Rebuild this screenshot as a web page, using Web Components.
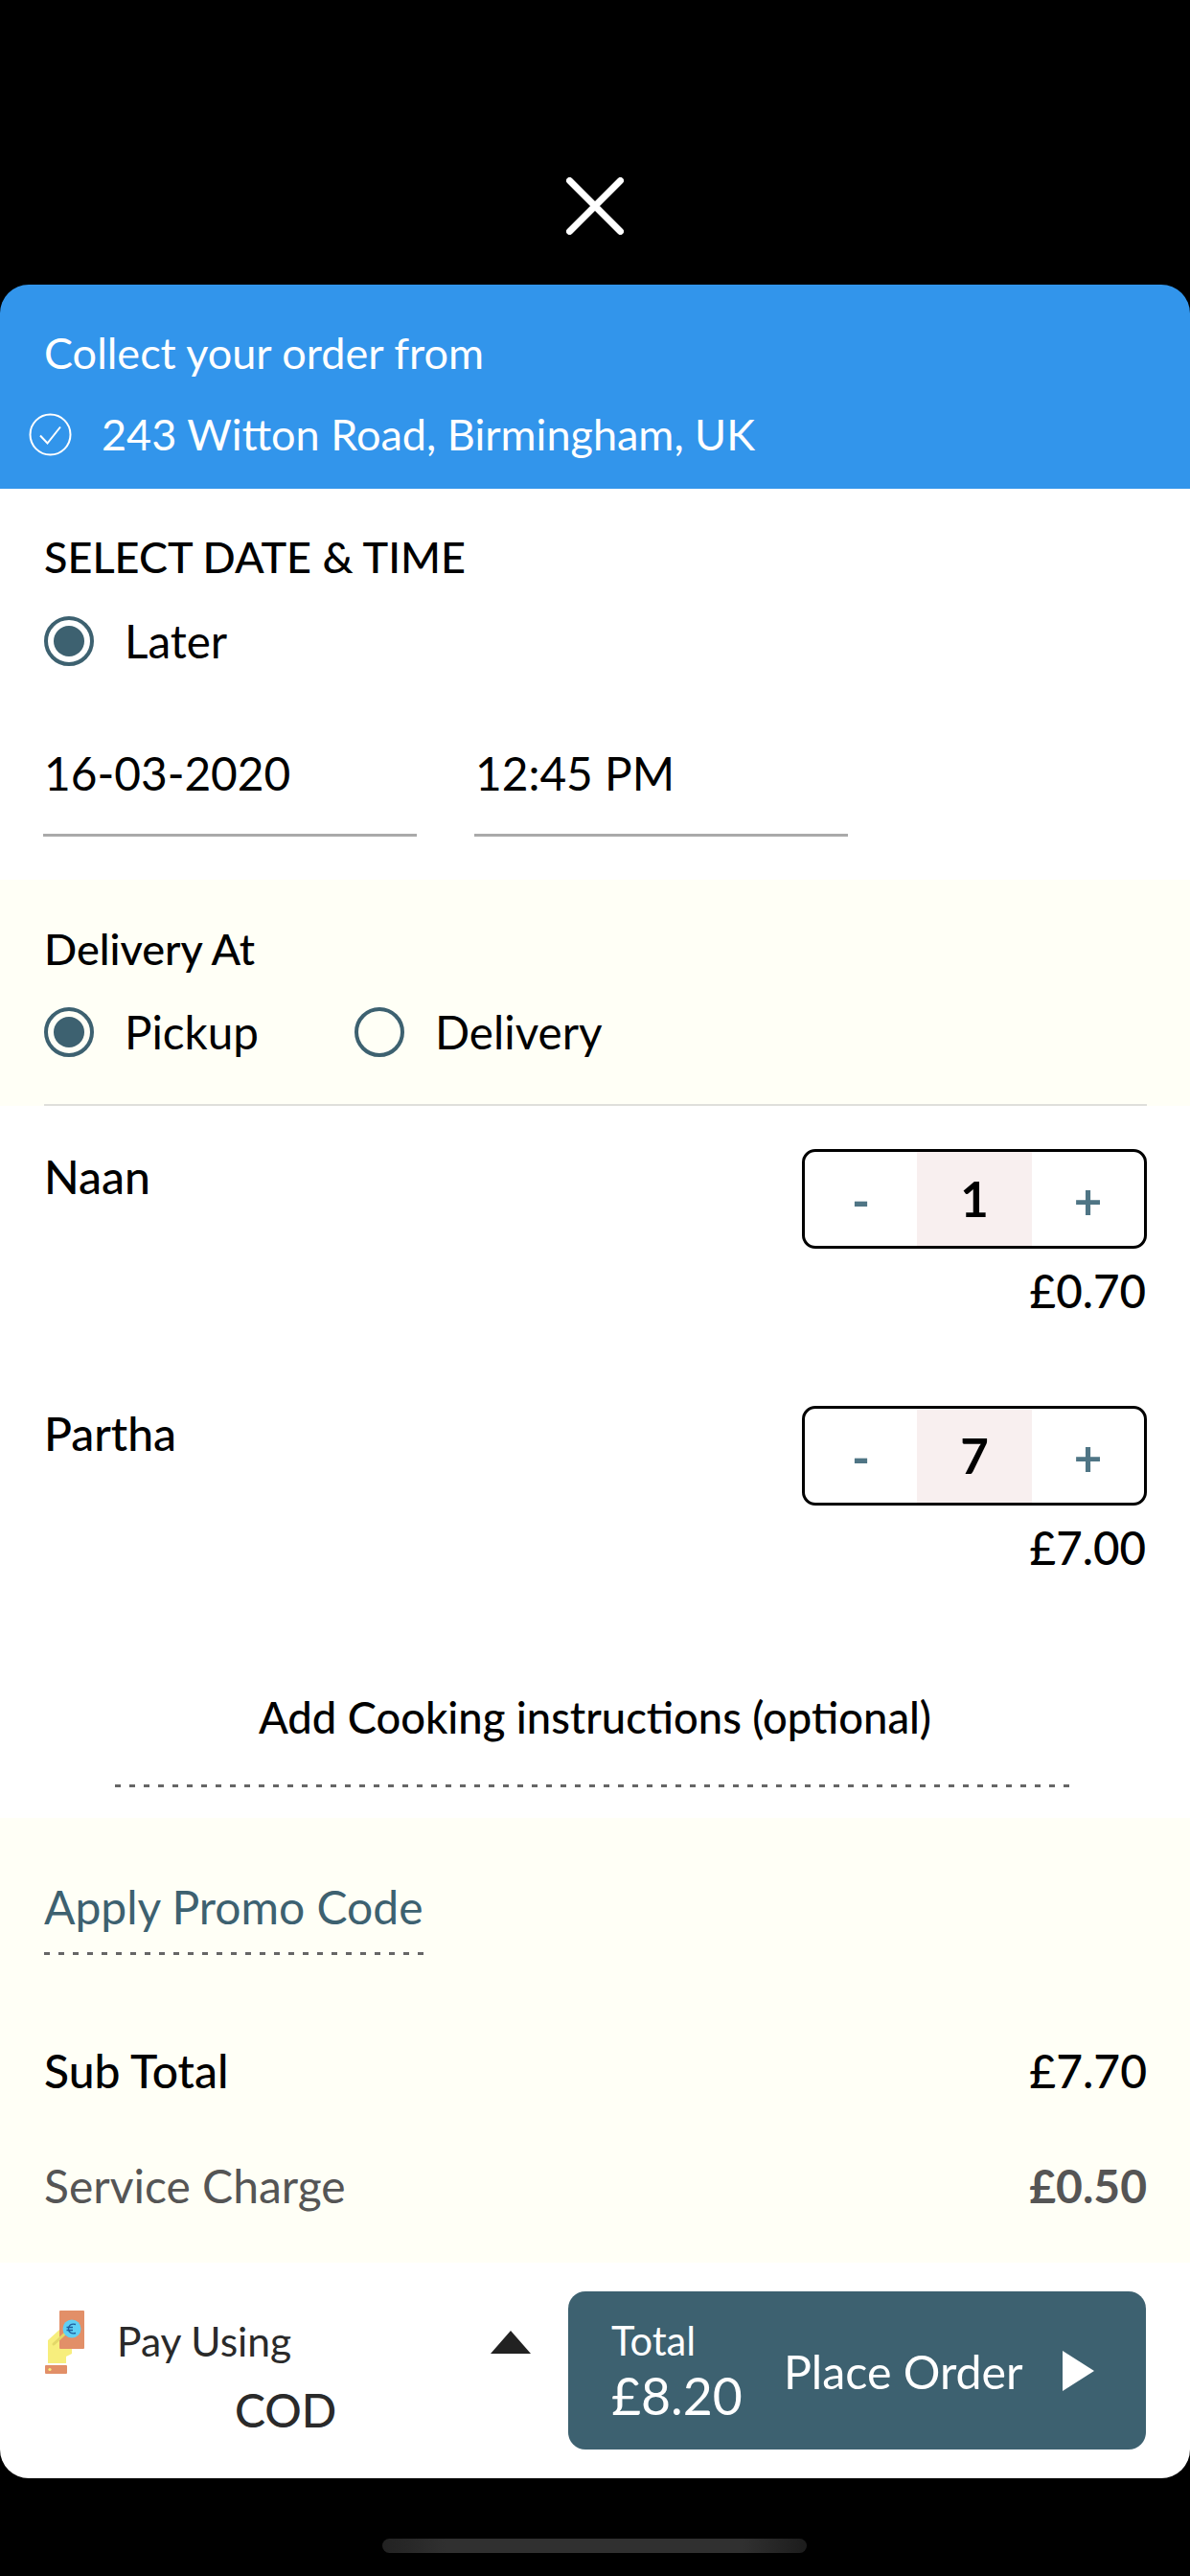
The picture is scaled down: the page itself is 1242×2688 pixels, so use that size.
<!DOCTYPE html>
<html>
<head>
<meta charset="utf-8">
<title>Checkout</title>
<style>
  html, body { margin: 0; padding: 0; background: #000; }
  body { width: 1242px; height: 2688px; overflow: hidden; font-family: Lato, "Liberation Sans", sans-serif; color: #000; }
  order-sheet { width: 1242px; height: 2586px; }
</style>
</head>
<body>
<order-sheet>
  <close-bar></close-bar>
  <pickup-header heading="Collect your order from" address="243 Witton Road, Birmingham, UK"></pickup-header>
  <date-section></date-section>
  <delivery-at></delivery-at>
  <cart-item name="Naan" qty="1" price="£0.70"></cart-item>
  <cart-item name="Partha" qty="7" price="£7.00"></cart-item>
  <cook-note></cook-note>
  <promo-summary></promo-summary>
  <checkout-bar></checkout-bar>
</order-sheet>
<home-bar></home-bar>

<script>
  // Every element fills its shadow root from a small html string
  function shadow(el, html) {
    el.attachShadow({ mode: 'open' }).innerHTML = html;
  }

  class OrderSheet extends HTMLElement {
    constructor() {
      super();
      shadow(this, `<style>:host { display: flex; flex-direction: column; }</style><slot></slot>`);
    }
  }

  class CloseBar extends HTMLElement {
    constructor() {
      super();
      shadow(this, `
        <style>
          :host { display: flex; justify-content: center; height: 297px; padding-top: 185px; box-sizing: border-box; }
          svg { width: 60px; height: 60px; }
        </style>
        <svg viewBox="0 0 60 60"><path d="M3.5 3.5L56.5 56.5M56.5 3.5L3.5 56.5" stroke="#fff" stroke-width="7" stroke-linecap="round" fill="none"/></svg>`);
    }
  }

  class PickupHeader extends HTMLElement {
    constructor() {
      super();
      shadow(this, `
        <style>
          :host { display: block; height: 213px; box-sizing: border-box; background: #3295eb; border-radius: 30px 30px 0 0; color: #fff; padding: 46px 0 0 46px; font-size: 45px; line-height: 50px; }
          .addr { display: flex; align-items: center; margin: 35px 0 0 -16px; }
          svg { width: 45px; height: 45px; margin-right: 31px; }
        </style>
        <div>${this.getAttribute('heading')}</div>
        <div class="addr">
          <svg viewBox="0 0 45 45"><circle cx="22.5" cy="22.5" r="21" fill="none" stroke="#fff" stroke-width="2"/><path d="M12 23.5L19.5 31.5L33 14.5" fill="none" stroke="#fff" stroke-width="2"/></svg>
          <span>${this.getAttribute('address')}</span>
        </div>`);
    }
  }

  class RadioOption extends HTMLElement {
    constructor() {
      super();
      shadow(this, `
        <style>
          :host { display: flex; align-items: center; font-size: 47.6px; line-height: 52px; }
          i { width: 52px; height: 52px; box-sizing: border-box; border: 4px solid #3d6170; border-radius: 50%; margin-right: 32px; display: flex; align-items: center; justify-content: center; }
          :host([checked]) b { width: 32px; height: 32px; border-radius: 50%; background: #3d6170; }
        </style>
        <i><b></b></i><slot></slot>`);
    }
  }

  class DateSection extends HTMLElement {
    constructor() {
      super();
      shadow(this, `
        <style>
          :host { display: block; height: 408px; box-sizing: border-box; background: #fff; padding: 46px 0 0 46px; }
          .head { font-size: 45px; line-height: 50px; font-weight: 500; }
          radio-option { margin-top: 37px; }
          .fields { display: flex; gap: 60px; margin-top: 86px; margin-left: -1px; }
          .field { width: 390px; height: 92px; box-sizing: border-box; border-bottom: 3px solid #aaa; font-size: 47.8px; line-height: 52px; padding-left: 1px; }
        </style>
        <div class="head">SELECT DATE &amp; TIME</div>
        <radio-option checked>Later</radio-option>
        <div class="fields"><div class="field">16-03-2020</div><div class="field">12:45 PM</div></div>`);
    }
  }

  class DeliveryAt extends HTMLElement {
    constructor() {
      super();
      shadow(this, `
        <style>
          :host { display: block; height: 236px; box-sizing: border-box; background: #fffff6; padding: 47px 0 0 46px; }
          .head { font-size: 45px; line-height: 50px; font-weight: 500; }
          .opts { display: flex; gap: 100px; margin-top: 36px; }
          hr { margin: 49px 45px 0 0; border: 0; height: 2px; background: #dfdfdb; }
        </style>
        <div class="head">Delivery At</div>
        <div class="opts"><radio-option checked>Pickup</radio-option><radio-option>Delivery</radio-option></div>
        <hr>`);
    }
  }

  class CartItem extends HTMLElement {
    constructor() {
      super();
      shadow(this, `
        <style>
          :host { display: flex; justify-content: space-between; height: 268px; box-sizing: border-box; background: #fff; padding: 45px 45px 0 46px; font-size: 48px; line-height: 52px; }
          .name { font-weight: 500; margin-top: 3px; }
          .right { display: flex; flex-direction: column; align-items: flex-end; }
          .stepper { display: grid; grid-template-columns: 117px 120px 117px; width: 360px; height: 104px; box-sizing: border-box; border: 3px solid #000; border-radius: 14px; overflow: hidden; text-align: center; font-size: 51px; }
          .stepper span { line-height: 101px; color: #4f7585; font-weight: 700; }
          .stepper .qty { line-height: 98px; background: #f8efef; color: #000; }
          .price { margin-top: 18px; margin-right: 1px; font-size: 47.5px; font-weight: 500; }
        </style>
        <div class="name">${this.getAttribute('name')}</div>
        <div class="right">
          <div class="stepper"><span>-</span><span class="qty">${this.getAttribute('qty')}</span><span>+</span></div>
          <div class="price">${this.getAttribute('price')}</div>
        </div>`);
    }
  }

  class CookNote extends HTMLElement {
    constructor() {
      super();
      shadow(this, `
        <style>
          :host { display: block; height: 207px; box-sizing: border-box; background: #fff; padding-top: 76px; text-align: center; font-size: 45.3px; line-height: 52px; font-weight: 500; }
          .rule { margin: 44px 125px 0 120px; height: 3px; background: repeating-linear-gradient(90deg, #666 0 6px, transparent 6px 15px); }
        </style>
        <div>Add Cooking instructions (optional)</div>
        <div class="rule"></div>`);
    }
  }

  class PromoSummary extends HTMLElement {
    constructor() {
      super();
      shadow(this, `
        <style>
          :host { display: block; height: 464px; box-sizing: border-box; background: #fffff6; padding: 66px 45px 0 46px; font-size: 48px; line-height: 54px; }
          .promo { color: #3d6170; width: 396px; white-space: nowrap; }
          .rule { width: 396px; height: 3px; margin-top: 20px; background: repeating-linear-gradient(90deg, #666 0 6px, transparent 6px 15px); }
          .row { display: flex; justify-content: space-between; }
          .sub { margin-top: 94px; font-weight: 500; }
          .svc { margin-top: 66px; color: #555; }
          .svc b { font-weight: 700; }
        </style>
        <div class="promo">Apply Promo Code</div>
        <div class="rule"></div>
        <div class="row sub"><span>Sub Total</span><span>£7.70</span></div>
        <div class="row svc"><span>Service Charge</span><b>£0.50</b></div>`);
    }
  }

  class CheckoutBar extends HTMLElement {
    constructor() {
      super();
      shadow(this, `
        <style>
          :host { display: flex; height: 225px; box-sizing: border-box; background: #fff; border-radius: 0 0 30px 30px; padding: 30px 46px 30px 47px; color: #2a2a2a; }
          .pay { width: 546px; height: 165px; box-sizing: border-box; padding-right: 39px; display: grid; grid-template-columns: 75px 1fr 42px; grid-template-rows: 90px 75px; align-items: start; }
          .hand { width: 42px; height: 66px; margin-top: 20px; }
          .using { font-size: 42.6px; line-height: 50px; margin-top: 27px; }
          .arrow { width: 42px; height: 24px; margin-top: 41px; }
          .cod { grid-column: 1 / span 3; padding-left: 198px; font-size: 48px; font-weight: 500; line-height: 54px; margin-top: 7px; }
          .btn { width: 603px; height: 165px; box-sizing: border-box; background: #3d6170; border-radius: 18px; color: #fff; display: flex; align-items: center; padding-left: 45px; }
          .tot { width: 180px; }
          .tot div:first-child { font-size: 41.6px; line-height: 48px; }
          .tot div:last-child { font-size: 53.5px; line-height: 60px; margin-top: 3px; }
          .place { font-size: 48.3px; line-height: 54px; margin-right: 41px; }
          .play { width: 33px; height: 42px; }
        </style>
        <div class="pay">
          <svg class="hand" viewBox="0 0 42 66">
            <path d="M3 31L15 20H28V45L22 48V55H3Z" fill="#f7ee7d"/>
            <rect x="15" y="0" width="26" height="40" rx="1" fill="#e28f68"/>
            <path d="M9 35L21 24" stroke="#e3d768" stroke-width="3" stroke-linecap="round"/>
            <circle cx="28" cy="19" r="9.5" fill="#5fd0f5"/>
            <path d="M32 14.5C27 13 24.5 16 24.5 19C24.5 22 27 25 32 23.5M22.5 17.5H29M22.5 20.5H29" fill="none" stroke="#1f5f9e" stroke-width="1.4"/>
            <rect x="0" y="57" width="23" height="9" rx="1" fill="#e28f68"/>
            <circle cx="5" cy="61.5" r="1.6" fill="#f7ee7d"/>
          </svg>
          <div class="using">Pay Using</div>
          <svg class="arrow" viewBox="0 0 42 24"><path d="M21 0L42 24H0Z" fill="#222"/></svg>
          <div class="cod">COD</div>
        </div>
        <div class="btn">
          <div class="tot"><div>Total</div><div>£8.20</div></div>
          <div class="place">Place Order</div>
          <svg class="play" viewBox="0 0 33 42"><path d="M0 0L33 21L0 42Z" fill="#fff"/></svg>
        </div>`);
    }
  }

  class HomeBar extends HTMLElement {
    constructor() {
      super();
      shadow(this, `
        <style>
          :host { display: block; width: 443px; height: 15px; margin: 63px 0 0 399px; border-radius: 8px; background: linear-gradient(90deg, #222, #303030 15%, #303030 85%, #1c1c1c); }
        </style>`);
    }
  }

  customElements.define('order-sheet', OrderSheet);
  customElements.define('close-bar', CloseBar);
  customElements.define('pickup-header', PickupHeader);
  customElements.define('radio-option', RadioOption);
  customElements.define('date-section', DateSection);
  customElements.define('delivery-at', DeliveryAt);
  customElements.define('cart-item', CartItem);
  customElements.define('cook-note', CookNote);
  customElements.define('promo-summary', PromoSummary);
  customElements.define('checkout-bar', CheckoutBar);
  customElements.define('home-bar', HomeBar);
</script>
</body>
</html>
